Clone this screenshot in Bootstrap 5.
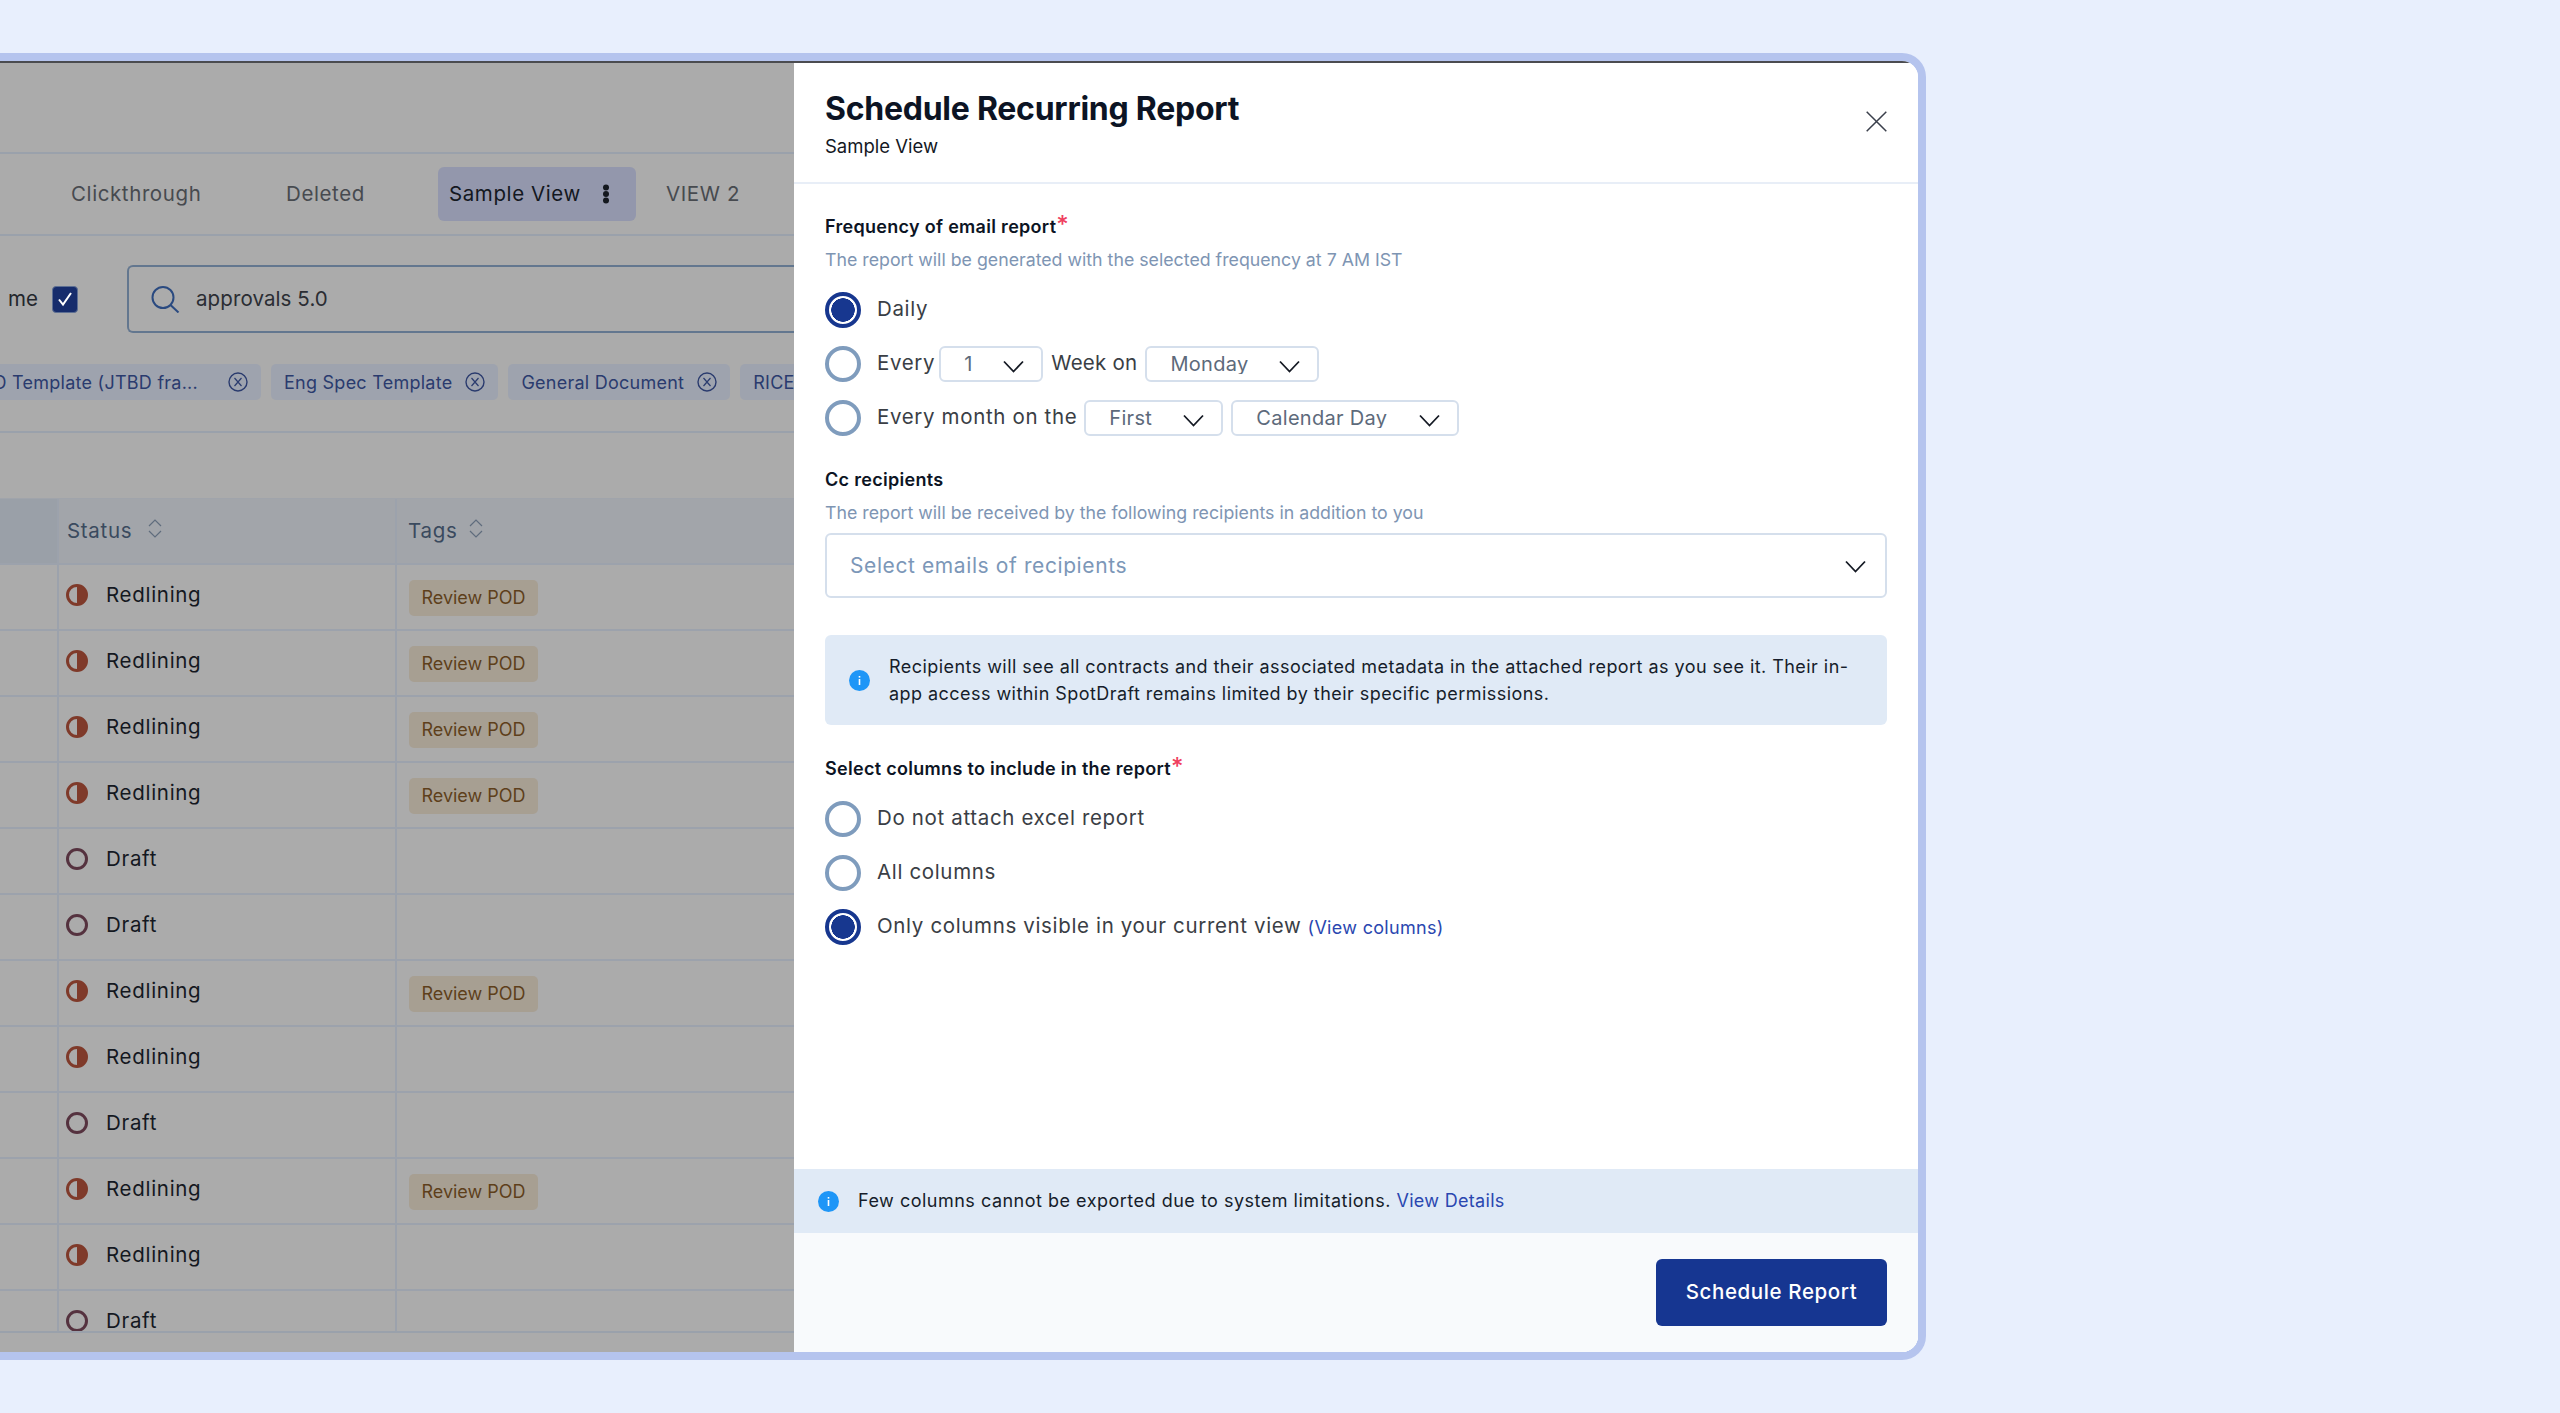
<!DOCTYPE html>
<html lang="en">
<head>
<meta charset="utf-8">
<title>Schedule Recurring Report</title>
<link href="https://cdn.jsdelivr.net/npm/bootstrap@5.3.0/dist/css/bootstrap.min.css" rel="stylesheet">
<style>
html,body{height:100%;}
body{background:#e8effd;font-family:"Inter","Noto Sans",sans-serif;color:#2c3038;overflow:hidden;}
.frame-wrap{padding-top:53px;width:1926px;}
.frame{height:1307px;border:8px solid #b5c4ee;border-left:0;border-radius:0 24px 24px 0;overflow:hidden;background:#fff;}
.frame-in{height:100%;border-top:2px solid #4b4c50;}
/* dimmed page behind the modal */
.back{width:794px;flex:none;background:#ababab;overflow:hidden;color:#14181f;}
.back-top{height:91px;border-bottom:2px solid #9aa1ab;}
.tabbar{height:82px;border-bottom:2px solid #9aa1ab;font-size:20.5px;letter-spacing:.6px;color:#474a4f;}
.tab-a{width:215px;margin-left:71px;}
.tab-b{width:152px;}
.tab-pill{width:198px;height:54px;background:#9397ac;border-radius:6px;padding:0 11px;color:#14181f;}
.dots{margin-right:15px;}
.tab-c{margin-left:30px;}
.filters{height:197px;border-bottom:2px solid #9aa1ab;padding-top:29px;}
.me-text{margin-left:8px;width:44px;font-size:20.5px;color:#23262c;}
.mine-box{width:26px;height:27px;background:#162c6c;border:1px solid #5d6f93;border-radius:4px;}
.searchbox{height:68px;margin-left:49px;flex:1;border:2px solid #63778f;border-right:0;border-radius:6px 0 0 6px;padding-left:22px;font-size:20.5px;letter-spacing:.1px;color:#2a2d33;}
.chiprow{margin-top:31px;height:36px;flex-wrap:nowrap;gap:10px;}
.fchip{height:36px;flex:none;background:#9ea3ae;border-radius:5px;padding:0 13px;font-size:18px;letter-spacing:.25px;color:#2a3b6e;white-space:nowrap;gap:13px;}
.fchip-a{width:300px;margin-left:-39px;justify-content:flex-end;}
.fchip-a span{margin-right:17px;}
.spacer-t{height:65px;}
.tbl-wrap{height:835px;overflow:hidden;border-bottom:2px solid #9aa1ab;border-top:1px solid #a0a4ab;}
.rep-tbl{table-layout:fixed;width:794px;border-collapse:collapse;margin:0;}
.rep-tbl th,.rep-tbl td{height:66px;padding:0;border-bottom:2px solid #9ca2ac;border-right:2px solid #9ca2ac;background:#ababab;vertical-align:middle;font-weight:400;color:#14181f;box-shadow:none;}
.rep-tbl th{height:65px;background:#a2a5aa;font-size:20.5px;letter-spacing:.7px;color:#3a4a5e;}
.rep-tbl th.col0{background:#9aa0a8;}
.rep-tbl td.col0,.rep-tbl th.col0{width:58px;}
.rep-tbl .col1{width:338px;}
.rep-tbl .col2{border-right:0;}
.cell1{padding-left:7px;font-size:20.5px;letter-spacing:.7px;}
.rep-tbl th .cell1{padding-left:8px;gap:16px;}
.rep-tbl td .cell1{padding-bottom:4px;gap:18px;}
.cell2{padding-left:12px;}
.rep-tbl th .cell2{padding-left:11px;gap:12px;}
.sorter{margin-bottom:6px;}
.tagchip{height:36px;width:129px;background:#a79f92;border-radius:5px;font-size:18px;color:#5e3f1b;margin-top:1px;}
/* modal */
.sheet{flex:1;background:#fff;min-width:0;}
.sheet-head{height:121px;border-bottom:2px solid #e8eef7;padding:27px 31px 0;}
.sheet-title{font-size:32px;font-weight:700;letter-spacing:-.25px;line-height:38px;margin:0;color:#0c1424;}
.sheet-sub{font-size:18.5px;line-height:24px;margin-top:6px;color:#14181f;}
.closer{background:none;border:0;padding:0;width:21px;height:21px;margin-top:21px;display:block;}
.sheet-body{flex:1;padding:31px 31px 0;}
.flabel{font-size:18px;letter-spacing:.3px;font-weight:600;line-height:24px;color:#0c1424;}
.flabel b{color:#ef4060;font-weight:500;font-size:24px;line-height:10px;}
.fhint{font-size:17.75px;line-height:24px;margin-top:9px;color:#7e95b3;}
.rrow{height:36px;font-size:20.5px;letter-spacing:.65px;color:#3a3e45;margin-top:18px;white-space:nowrap;}
.rrow>span{padding-bottom:1px;}
.rrow>span.snug{letter-spacing:.25px;}
.rrow-first{margin-top:20px;}
.rad.form-check-input{width:36px;height:36px;margin:0 16px 0 0;flex:none;border:4px solid #7f9cbd;background-color:#fff;}
.rad.form-check-input:checked{border-color:#17378f;background-color:#fff;background-image:radial-gradient(circle,#17378f 0,#17378f 11.5px,#fff 12px);}
.sel.form-select{height:36px;flex:none;font-size:20px;letter-spacing:.3px;line-height:1;color:#5d6a7b;border:2px solid #d5dfec;border-radius:6px;padding:0 0 0 23px;box-shadow:none;background-size:21px 13px;background-position:right 17px top 12px;background-image:url("data:image/svg+xml,%3Csvg xmlns='http://www.w3.org/2000/svg' viewBox='0 0 21 13'%3E%3Cpath d='M1 1.5l9.5 10 9.5-10' fill='none' stroke='%23151a24' stroke-width='1.8'/%3E%3C/svg%3E");}
.sel.s-one{width:104px;margin:0 8px 0 4px;}
.sel.s-mon{width:174px;margin-left:8px;}
.sel.s-first{width:139px;margin:0 8px 0 7px;}
.sel.s-cal{width:228px;}
.ccgap{margin-top:32px;}
.sel.bigsel{height:65px;margin-top:8px;font-size:21px;letter-spacing:.6px;padding-left:23px;color:#7c97b8;background-position:right 19px top 25px;}
.note{height:90px;margin-top:37px;background:#e0eaf6;border-radius:6px;padding-left:24px;font-size:18px;letter-spacing:.45px;line-height:27px;color:#161d2a;}
.note-text{margin-left:19px;width:985px;}
.linky{color:#2a47b0;text-decoration:none;}
.rrow .linky{font-size:18px;letter-spacing:.3px;margin-left:6px;}
.notice{height:64px;background:#e0eaf6;padding-left:24px;font-size:18px;letter-spacing:.5px;color:#161d2a;}
.notice span{margin-left:19px;padding-bottom:2px;}
.notice .linky{letter-spacing:.3px;}
.sheet-foot{height:119px;background:#f8fafc;padding-right:31px;}
.btn.go{width:231px;height:67px;background:#163691;border:0;border-radius:6px;color:#fff;font-size:20.5px;letter-spacing:.6px;font-weight:500;}
</style>
</head>
<body>
<div class="frame-wrap">
 <div class="frame">
  <div class="frame-in d-flex">
   <div class="back">
    <div class="back-top"></div>
    <div class="tabbar d-flex align-items-center">
     <div class="tab-a">Clickthrough</div>
     <div class="tab-b">Deleted</div>
     <div class="tab-pill d-flex align-items-center justify-content-between">
      <span>Sample View</span>
      <svg width="8" height="20" viewBox="0 0 8 20" class="dots" aria-hidden="true"><circle cx="4" cy="3.5" r="3" fill="#14181f"/><circle cx="4" cy="10" r="3" fill="#14181f"/><circle cx="4" cy="16.5" r="3" fill="#14181f"/></svg>
     </div>
     <div class="tab-c">VIEW 2</div>
    </div>
    <div class="filters">
     <div class="d-flex align-items-center">
      <div class="me-text">me</div>
      <div class="mine-box d-flex align-items-center justify-content-center">
       <svg width="18" height="18" viewBox="0 0 18 18" aria-hidden="true"><path d="M3 9.5l4 5L15 3" fill="none" stroke="#fff" stroke-width="2"/></svg>
      </div>
      <div class="searchbox d-flex align-items-center">
       <svg width="29" height="27" viewBox="0 0 29 27" class="me-3" aria-hidden="true"><circle cx="12" cy="11.5" r="10.5" fill="none" stroke="#2a4a80" stroke-width="2"/><path d="M19.5 19l8 7.5" fill="none" stroke="#2a4a80" stroke-width="2"/></svg>
       <span>approvals 5.0</span>
      </div>
     </div>
     <div class="chiprow d-flex">
      <div class="fchip fchip-a d-flex align-items-center"><span>D Template (JTBD fra...</span><svg width="20" height="20" viewBox="0 0 20 20" aria-hidden="true"><circle cx="10" cy="10" r="9" fill="none" stroke="#2a3b6e" stroke-width="1.4"/><path d="M6.5 6l7 8M13.5 6l-7 8" stroke="#2a3b6e" stroke-width="1.2"/></svg></div>
      <div class="fchip d-flex align-items-center"><span>Eng Spec Template</span><svg width="20" height="20" viewBox="0 0 20 20" aria-hidden="true"><circle cx="10" cy="10" r="9" fill="none" stroke="#2a3b6e" stroke-width="1.4"/><path d="M6.5 6l7 8M13.5 6l-7 8" stroke="#2a3b6e" stroke-width="1.2"/></svg></div>
      <div class="fchip d-flex align-items-center"><span>General Document</span><svg width="20" height="20" viewBox="0 0 20 20" aria-hidden="true"><circle cx="10" cy="10" r="9" fill="none" stroke="#2a3b6e" stroke-width="1.4"/><path d="M6.5 6l7 8M13.5 6l-7 8" stroke="#2a3b6e" stroke-width="1.2"/></svg></div>
      <div class="fchip d-flex align-items-center"><span>RICE</span></div>
     </div>
    </div>
    <div class="spacer-t"></div>
    <div class="tbl-wrap">
     <table class="table rep-tbl">
      <thead><tr>
       <th class="col0"></th>
       <th class="col1"><div class="cell1 d-flex align-items-center">Status<svg width="14" height="19" viewBox="0 0 14 19" class="sorter" aria-hidden="true"><path d="M1 7l6-6 6 6M1 12l6 6 6-6" fill="none" stroke="#5f6c7d" stroke-width="1.2"/></svg></div></th>
       <th class="col2"><div class="cell2 d-flex align-items-center">Tags<svg width="14" height="19" viewBox="0 0 14 19" class="sorter" aria-hidden="true"><path d="M1 7l6-6 6 6M1 12l6 6 6-6" fill="none" stroke="#5f6c7d" stroke-width="1.2"/></svg></div></th>
      </tr></thead>
      <tbody id="rows"></tbody>
     </table>
    </div>
   </div>
   <div class="sheet d-flex flex-column">
    <div class="sheet-head d-flex justify-content-between align-items-start">
     <div>
      <h1 class="sheet-title">Schedule Recurring Report</h1>
      <div class="sheet-sub">Sample View</div>
     </div>
     <button class="closer" type="button" aria-label="Close"><svg width="21" height="21" viewBox="0 0 21 21" class="d-block" aria-hidden="true"><path d="M.7.7l19.6 19.6M20.3.7L.7 20.3" stroke="#3a3f4b" stroke-width="1.5"/></svg></button>
    </div>
    <div class="sheet-body">
     <div class="flabel">Frequency of email report<b>*</b></div>
     <div class="fhint">The report will be generated with the selected frequency at 7 AM IST</div>
     <div class="rrow rrow-first d-flex align-items-center"><input class="form-check-input rad" type="radio" name="fq" checked aria-label="Daily"><span>Daily</span></div>
     <div class="rrow d-flex align-items-center"><input class="form-check-input rad" type="radio" name="fq" aria-label="Every"><span>Every</span><select class="form-select sel s-one" aria-label="Weeks"><option>1</option></select><span class="snug">Week on</span><select class="form-select sel s-mon" aria-label="Weekday"><option>Monday</option></select></div>
     <div class="rrow d-flex align-items-center"><input class="form-check-input rad" type="radio" name="fq" aria-label="Every month"><span>Every month on the</span><select class="form-select sel s-first" aria-label="Which"><option>First</option></select><select class="form-select sel s-cal" aria-label="Day type"><option>Calendar Day</option></select></div>
     <div class="flabel ccgap">Cc recipients</div>
     <div class="fhint">The report will be received by the following recipients in addition to you</div>
     <select class="form-select sel bigsel w-100" aria-label="Recipients"><option>Select emails of recipients</option></select>
     <div class="note d-flex align-items-center">
      <svg width="21" height="21" viewBox="0 0 21 21" class="flex-shrink-0" aria-hidden="true"><circle cx="10.5" cy="10.5" r="10.5" fill="#1e96f7"/><rect x="9.7" y="9" width="1.6" height="6" fill="#fff"/><rect x="9.7" y="6" width="1.6" height="1.6" fill="#fff"/></svg>
      <div class="note-text">Recipients will see all contracts and their associated metadata in the attached report as you see it. Their in-app access within SpotDraft remains limited by their specific permissions.</div>
     </div>
     <div class="flabel ccgap">Select columns to include in the report<b>*</b></div>
     <div class="rrow rrow-first d-flex align-items-center"><input class="form-check-input rad" type="radio" name="cl" aria-label="None"><span>Do not attach excel report</span></div>
     <div class="rrow d-flex align-items-center"><input class="form-check-input rad" type="radio" name="cl" aria-label="All"><span>All columns</span></div>
     <div class="rrow d-flex align-items-center"><input class="form-check-input rad" type="radio" name="cl" checked aria-label="Visible"><span>Only columns visible in your current view</span><a class="linky" href="#">(View columns)</a></div>
    </div>
    <div class="notice d-flex align-items-center">
     <svg width="21" height="21" viewBox="0 0 21 21" aria-hidden="true"><circle cx="10.5" cy="10.5" r="10.5" fill="#1e96f7"/><rect x="9.7" y="9" width="1.6" height="6" fill="#fff"/><rect x="9.7" y="6" width="1.6" height="1.6" fill="#fff"/></svg>
     <span>Few columns cannot be exported due to system limitations. <a class="linky" href="#">View Details</a></span>
    </div>
    <div class="sheet-foot d-flex align-items-center justify-content-end">
     <button class="btn go" type="button">Schedule Report</button>
    </div>
   </div>
  </div>
 </div>
</div>
<script src="https://cdn.jsdelivr.net/npm/bootstrap@5.3.0/dist/js/bootstrap.bundle.min.js"></script>
<script>
var data=[[1,1],[1,1],[1,1],[1,1],[0,0],[0,0],[1,1],[1,0],[0,0],[1,1],[1,0],[0,0]];
var half='<svg width="22" height="22" viewBox="0 0 22 22" aria-hidden="true"><circle cx="11" cy="11" r="9.5" fill="none" stroke="#7f3a2a" stroke-width="3"/><path d="M11 1.5a9.5 9.5 0 0 1 0 19z" fill="#7f3a2a"/></svg>';
var ring='<svg width="22" height="22" viewBox="0 0 22 22" aria-hidden="true"><circle cx="11" cy="11" r="9.5" fill="none" stroke="#55323f" stroke-width="3"/></svg>';
document.getElementById('rows').innerHTML=data.map(function(d){
 return '<tr><td class="col0"></td><td class="col1"><div class="cell1 d-flex align-items-center">'+(d[0]?half+'<span>Redlining</span>':ring+'<span>Draft</span>')+'</div></td><td class="col2"><div class="cell2">'+(d[1]?'<div class="tagchip d-flex align-items-center justify-content-center">Review POD</div>':'')+'</div></td></tr>';
}).join('');
</script>
</body>
</html>
